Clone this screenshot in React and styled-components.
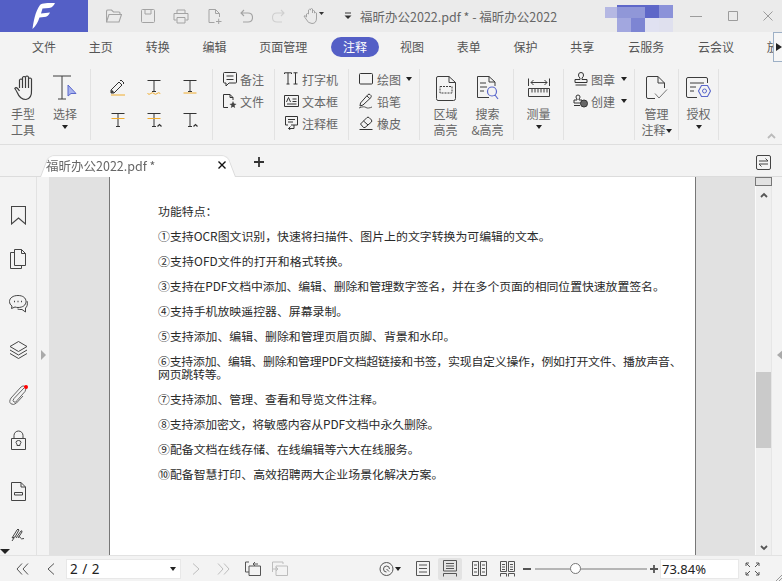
import styled, { createGlobalStyle } from "styled-components";

const Global = createGlobalStyle`
  html, body { margin: 0; padding: 0; background: #f3f3f3; }
  * { box-sizing: border-box; }
  body { font-family: "Noto Sans CJK SC", "Noto Sans", sans-serif; overflow: hidden; }
`;

const Window = styled.div`
  width: 782px;
  height: 581px;
  display: flex;
  flex-direction: column;
  overflow: hidden;
  position: relative;
`;

/* title bar */
const TitleBar = styled.div`
  height: 32px;
  display: flex;
  align-items: center;
  background: #ebebeb;
`;
const Logo = styled.div`
  width: 88px;
  height: 32px;
  background: #545fc6;
  display: flex;
  align-items: center;
  justify-content: center;
`;
const QuickTools = styled.div`
  width: 272px;
  flex: none;
  display: flex;
  align-items: center;
  color: #a3a3a3;
  padding-left: 18px;
  gap: 18.5px;
`;
const TitleText = styled.div`
  font-size: 12.5px;
  color: #666;
  white-space: nowrap;
  width: 245px;
  flex: none;
  font-family: "Noto Sans CJK SC", sans-serif;
`;
const Mosaic = styled.div`
  width: 68px;
  height: 27px;
  margin-top: 5px;
  display: grid;
  grid-template-columns: 12px repeat(4, 14px);
  grid-template-rows: 2px 11px 14px;
`;
const Tile = styled.div`
  background: ${(p) => p.$c};
`;
const WinButtons = styled.div`
  display: flex;
  align-items: center;
  margin-left: 17px;
  gap: 25.5px;
  color: #9c9c9c;
`;

/* menu tabs */
const MenuBar = styled.div`
  height: 30px;
  background: #f3f3f3;
  display: flex;
  align-items: center;
  padding-left: 20px;
  gap: 8.8px;
  position: relative;
  overflow: hidden;
`;
const MenuTab = styled.div`
  flex: none;
  height: 20px;
  line-height: 20px;
  padding: 0 12px;
  margin-left: ${(p) => p.$ml || 0}px;
  border-radius: 10px;
  font-size: 12px;
  color: ${(p) => (p.$active ? "#fff" : "#555")};
  background: ${(p) => (p.$active ? "#545fc6" : "transparent")};
`;
const MenuMore = styled.div`
  position: absolute;
  right: 0;
  top: 0;
  width: 9px;
  height: 30px;
  background: #f6f6f6;
  border: 1px solid #9db0c6;
  border-right: 0;
  display: flex;
  align-items: center;
  padding-left: 2px;
`;

/* ribbon */
const Ribbon = styled.div`
  height: 83px;
  background: #f3f3f3;
  border-bottom: 1px solid #dedede;
  display: flex;
  padding-top: 7px;
  position: relative;
`;
const Group = styled.div`
  flex: none;
  width: ${(p) => p.$w}px;
  height: 71px;
  border-right: 1px solid #e2e2e2;
  display: flex;
  justify-content: ${(p) => p.$justify || "flex-start"};
`;
const BigButton = styled.div`
  width: ${(p) => p.$w}px;
  display: flex;
  flex-direction: column;
  align-items: center;
  color: #3c3c3c;
`;
const BigIcon = styled.div`
  height: 37px;
  padding-top: 1px;
  display: flex;
  align-items: center;
  justify-content: center;
`;
const BigLabel = styled.div`
  font-size: 12px;
  line-height: 15.5px;
  color: #666;
  text-align: center;
  white-space: nowrap;
`;
const Caret = styled.span`
  display: inline-block;
  width: 0;
  height: 0;
  border-left: 3.5px solid transparent;
  border-right: 3.5px solid transparent;
  border-top: 4px solid #222;
  vertical-align: middle;
  flex: none;
`;
const LabelCaret = styled(Caret)`
  margin-top: 3px;
`;
const TextGrid = styled.div`
  display: grid;
  grid-template-columns: repeat(3, 36px);
  grid-template-rows: 34px 32px;
  padding: 1px 0 0 9px;
  justify-items: center;
  align-items: center;
  color: #333;
`;
const SmallStack = styled.div`
  display: flex;
  flex-direction: column;
  margin-top: -1px;
  padding-left: 9px;
`;
const SmallRow = styled.div`
  height: 22px;
  display: flex;
  align-items: center;
  color: #333;
  gap: ${(p) => p.$gap || 3}px;
`;
const SmallLabel = styled.span`
  font-size: 12px;
  color: #666;
  white-space: nowrap;
`;
const RowIcon = styled.span`
  width: 15px;
  display: flex;
  justify-content: center;
  flex: none;
`;
const RowCaret = styled(Caret)`
  margin-left: ${(p) => p.$gap}px;
`;
const Collapse = styled.div`
  position: absolute;
  right: 6px;
  bottom: 5px;
  color: #bbb;
`;

/* document tabs */
const TabStrip = styled.div`
  height: 32px;
  background: #f3f3f3;
  border-bottom: 1px solid #dcdcdc;
  display: flex;
  align-items: flex-end;
  padding-left: 40px;
  position: relative;
`;
const DocTab = styled.div`
  width: 196px;
  height: 24px;
  position: relative;
  display: flex;
  align-items: center;
  justify-content: space-between;
  padding: 0 10px 0 6px;
  font-size: 12.5px;
  color: #666;
  z-index: 0;
  margin-bottom: -1px;
  &::before {
    content: "";
    position: absolute;
    inset: 0;
    background: #fff;
    border: 1px solid #dcdcdc;
    border-bottom: 0;
    border-radius: 6px 6px 0 0;
    transform: perspective(40px) rotateX(9deg);
    transform-origin: bottom;
    z-index: -1;
  }
`;
const NewTab = styled.div`
  margin: 0 0 4px 18px;
  color: #333;
  display: flex;
  height: 20px;
  align-items: center;
`;
const SwapButton = styled.div`
  margin: 0 10px 5px auto;
  width: 16px;
  height: 16px;
  display: flex;
`;

/* main area */
const Main = styled.div`
  flex: 1;
  display: flex;
  min-height: 0;
`;
const SideBar = styled.div`
  width: 37px;
  background: #f3f3f3;
  border-right: 1px solid #e2e2e2;
  display: flex;
  flex-direction: column;
  align-items: center;
  padding-top: 29px;
  color: #444;
  position: relative;
  overflow: hidden;
`;
const SideItem = styled.div`
  height: ${(p) => p.$h}px;
  flex: none;
  display: flex;
  justify-content: center;
  position: relative;
`;
const Dot = styled.span`
  position: absolute;
  top: 0;
  right: -1px;
  width: 4px;
  height: 4px;
  border-radius: 50%;
  background: #f00;
`;
const SideMore = styled.div`
  position: absolute;
  left: 0;
  bottom: 1px;
  width: 0;
  height: 0;
  border-left: 5px solid transparent;
  border-right: 5px solid transparent;
  border-top: 5px solid #222;
`;
const Strip = styled.div`
  width: ${(p) => p.$w}px;
  flex: none;
  background: #f3f3f3;
  display: flex;
  align-items: center;
  justify-content: center;
  padding-bottom: 22px;
`;
const Arrow = styled.div`
  width: 0;
  height: 0;
  border-top: 5px solid transparent;
  border-bottom: 5px solid transparent;
  ${(p) => (p.$left ? "border-right: 6px solid #aaa; margin-left: 5px;" : "border-left: 5px solid #aaa;")}
`;
const Canvas = styled.div`
  flex: 1;
  background: #e1e1e1;
  display: flex;
  padding-left: 60px;
  min-width: 0;
`;
const Page = styled.div`
  width: 587px;
  flex: none;
  background: #fff;
  border-left: 1px solid #777;
  border-right: 1px solid #777;
  padding: 26.5px 2px 0 48px;
  font-size: 11.9px;
  line-height: 13px;
  color: #2a2a2a;
`;
const Para = styled.p`
  margin: 0 0 12px;
  letter-spacing: ${(p) => p.$sp || 0}px;
`;
const ScrollTrack = styled.div`
  width: 17px;
  flex: none;
  background: #efefef;
  border-left: 1px solid #fafafa;
  border-right: 1px solid #e6e6e6;
  display: flex;
  flex-direction: column;
  align-items: center;
  color: #555;
`;
const ScrollSplit = styled.div`
  width: 17px;
  height: 9px;
  flex: none;
  background: #e2e2e2;
  border: 1px solid #777;
`;
const ScrollChevron = styled.div`
  margin-top: ${(p) => p.$top}px;
  display: flex;
`;
const ScrollThumb = styled.div`
  width: 15px;
  height: 76px;
  flex: none;
  margin-top: 174px;
  background: #cacaca;
`;

/* status bar */
const StatusBar = styled.div`
  height: 26px;
  background: #f3f3f3;
  border-top: 1px solid #e2e2e2;
  display: flex;
  align-items: center;
  color: #555;
  position: relative;
`;
const Nav = styled.div`
  flex: none;
  width: ${(p) => p.$w}px;
  margin-left: ${(p) => p.$ml || 0}px;
  display: flex;
  justify-content: center;
  color: ${(p) => (p.$off ? "#bdbdbd" : "#555")};
`;
const PageBox = styled.div`
  flex: none;
  width: 115px;
  height: 20px;
  background: #fff;
  border: 1px solid #e8e8e8;
  margin-left: 8px;
  display: flex;
  align-items: center;
  justify-content: space-between;
  padding: 0 4px 0 3px;
  font-size: 13.5px;
  word-spacing: 1px;
  color: #222;
  font-family: "Noto Sans", sans-serif;
`;
const ModeCaret = styled(Caret)`
  margin-left: 1px;
`;
const ViewButton = styled.div`
  flex: none;
  width: 24px;
  height: 22px;
  margin-left: ${(p) => p.$ml || 4}px;
  display: flex;
  align-items: center;
  justify-content: center;
  background: ${(p) => (p.$active ? "#e3e3e3" : "transparent")};
  border-radius: 2px;
`;
const Slider = styled.div`
  flex: none;
  width: 112px;
  height: 2px;
  margin-left: 3px;
  background: #b5b5b5;
  position: relative;
`;
const Knob = styled.div`
  position: absolute;
  left: 35px;
  top: -5px;
  width: 11px;
  height: 11px;
  border-radius: 50%;
  background: #fff;
  border: 1px solid #777;
`;
const ZoomBox = styled.div`
  flex: none;
  width: 79px;
  height: 20px;
  margin-left: 1px;
  background: #fff;
  border: 1px solid #e8e8e8;
  padding-left: 1px;
  font-size: 13px;
  line-height: 18px;
  color: #222;
  font-family: "Noto Sans", sans-serif;
`;
const Grip = styled.div`
  position: absolute;
  right: 0;
  bottom: 0;
  display: flex;
  color: #999;
`;
const Svg = styled.svg`
  display: block;
  flex: none;
  fill: none;
  stroke: ${(p) => p.$color || "currentColor"};
  stroke-width: ${(p) => p.$sw || 1};
`;

const Ic = ({ w, h, sw, color, children }) => (
  <Svg width={w} height={h} viewBox={`0 0 ${w} ${h}`} $sw={sw} $color={color}>
    {children}
  </Svg>
);

const Orange = "#f0ac2e";

/* text-markup glyph shared by the 2x3 grid */
const TBar = ({ w = 13, top = 1.5, stem = 11, line, wavy, strike, hat }) => (
  <Ic w={16} h={16}>
    <path d={`M${8 - w / 2} ${top}H${8 + w / 2}M8 ${top}V${top + stem}M6 ${top + stem}H10`} />
    {line && <path d={`M1.5 ${top + stem + 1.5}H14.5`} stroke={Orange} />}
    {wavy && <path d="M1.5 14.5q1.6 1.6 3.2 0t3.2 0t3.2 0t3.2 0" stroke={Orange} />}
    {strike && <path d={`M1.5 ${top + 5}H14.5`} stroke={Orange} />}
    {hat && <path d="M11.5 14.5l2-2l2 2" strokeWidth="1.2" />}
  </Ic>
);

const Blocks = [
  "transparent", "#5f68c9", "#5f68c9", "#5f68c9", "#8b92d9",
  "#b5b8e3", "#9097d8", "#9097d8", "#5e67c8", "#8b92d9",
  "transparent", "#a2a7df", "#7d85d3", "#e0e1f1", "#dfe0ee",
];

const Tabs = [
  ["文件"], ["主页"], ["转换"], ["编辑"], ["页面管理"], ["注释", 3], ["视图"], ["表单"],
  ["保护"], ["共享"], ["云服务", 1], ["云会议", 1], ["放映"],
];

const Lines = [
  ["功能特点："],
  ["①支持OCR图文识别，快速将扫描件、图片上的文字转换为可编辑的文本。"],
  ["②支持OFD文件的打开和格式转换。", 0.1],
  ["③支持在PDF文档中添加、编辑、删除和管理数字签名，并在多个页面的相同位置快速放置签名。", -0.07],
  ["④支持手机放映遥控器、屏幕录制。"],
  ["⑤支持添加、编辑、删除和管理页眉页脚、背景和水印。"],
  ["⑥支持添加、编辑、删除和管理PDF文档超链接和书签，实现自定义操作，例如打开文件、播放声音、网页跳转等。", -0.22],
  ["⑦支持添加、管理、查看和导览文件注释。"],
  ["⑧支持添加密文，将敏感内容从PDF文档中永久删除。", -0.1],
  ["⑨配备文档在线存储、在线编辑等六大在线服务。"],
  ["⑩配备智慧打印、高效招聘两大企业场景化解决方案。"],
];

export default function App() {
  return (
    <Window>
      <Global />
      <TitleBar>
        <Logo>
          <svg width="24" height="28" viewBox="0 0 24 28">
            <path d="M8 3C10 1 16 1 23 1C22 3 20 6 17 6L10.5 6.5L9 11.5L18 10.5C17 13 15 15 12 15L7.5 15.5C6 20 4 24 0.5 27C1.5 20 3 10 8 3Z" fill="#fff" />
          </svg>
        </Logo>
        <QuickTools>
          <Ic w={16} h={14}>
            <path d="M.5 13V2.5q0-1.5 1.5-1.5H5.500l2 2H13q1 0 1 1V5M.5 13L3 5.500H15.500L13 13Z" strokeWidth="1.100" />
          </Ic>
          <Ic w={14} h={14}>
            <path d="M1.500.5H12.500q1 0 1 1V12.500q0 1-1 1H1.500q-1 0-1-1V1.500q0-1 1-1ZM4 .5V5H10V.5" />
          </Ic>
          <Ic w={16} h={15}>
            <path d="M4 4V1H12V4M3.500 11H1V4.500H15V11H12.500M4 8.500H12V14H4Z" />
          </Ic>
          <Ic w={14} h={15}>
            <path d="M6.500 13.500H1V.5H7.500L11.500 4.500V8M7.500 .5V4.500H11.500M8 12.500H13.500M10.700 9.700V15" />
          </Ic>
          <Ic w={13} h={14}>
            <path d="M4 1L1 4L4 7M1 4H8Q12.500 4 12.500 8.500T8 13H3" strokeWidth="1.100" />
          </Ic>
          <Ic w={13} h={14} color="#cfcfcf">
            <path d="M9 1L12 4L9 7M12 4H5Q.5 4 .5 8.500T5 13H10" strokeWidth="1.100" />
          </Ic>
          <Ic w={22} h={16}>
            <path d="M3.500 9V6q1-1 2 0V2q1-1.500 2 0V1q1-1 2 0V5V3q1-1 2 0V5q1-1 2 0V10Q13.500 15.500 9 15.500Q5 15.500 3 11Q1.500 9 1 8q1-1 2.500 1" />
            <path d="M16 4h5l-2.500 3Z" fill="#333" stroke="none" />
          </Ic>
          <Ic w={8} h={8}>
            <path d="M1 1H7" stroke="#333" />
            <path d="M.5 3.500h7l-3.500 3.500Z" fill="#333" stroke="none" />
          </Ic>
        </QuickTools>
        <TitleText>福昕办公2022.pdf * - 福昕办公2022</TitleText>
        <Mosaic>
          {Blocks.map((c, i) => (
            <Tile key={i} $c={c} />
          ))}
        </Mosaic>
        <WinButtons>
          <Ic w={12} h={12}><path d="M0 6.500H12" /></Ic>
          <Ic w={10} h={10}><path d="M.5 .5H9.500V9.500H.5Z" /></Ic>
          <Ic w={10} h={10}><path d="M.5 .5L9.500 9.500M9.500 .5L.5 9.500" /></Ic>
        </WinButtons>
      </TitleBar>

      <MenuBar>
        {Tabs.map(([t, ml]) => (
          <MenuTab key={t} $ml={ml} $active={t === "注释"}>{t}</MenuTab>
        ))}
        <MenuMore>
          <Svg width={6} height={8} viewBox="0 0 6 8"><path d="M0 0L6 4L0 8Z" fill="#222" stroke="none" /></Svg>
        </MenuMore>
      </MenuBar>

      <Ribbon>
        <Group $w={91}>
          <BigButton $w={46}>
            <BigIcon>
              <Ic w={24} h={26} sw={1.200}>
                <path d="M5.500 13V5q1.500-2 3 0V2.500q1.500-2 3 0V2q1.500-2 3 0V4q1.500-2 3 0V15Q18 23.500 12 24.500Q6 24.500 3.500 18Q2 15 .8 13.500Q2.500 11 5.500 16M8.500 5V13M11.500 3V13M14.500 3V13" transform="translate(3 0)" />
              </Ic>
            </BigIcon>
            <BigLabel>手型<br />工具</BigLabel>
          </BigButton>
          <BigButton $w={38}>
            <BigIcon>
              <Ic w={24} h={26}>
                <path d="M0 1H18M9 1V24M5 24H13" />
                <path d="M15 10V21L18 18.500H23Z" fill="#a9b4ee" stroke="#5b68cc" />
              </Ic>
            </BigIcon>
            <BigLabel>选择</BigLabel>
            <LabelCaret />
          </BigButton>
        </Group>

        <Group $w={122}>
          <TextGrid>
            <Ic w={16} h={17}>
              <path d="M1 11L9 3L12 6L4 14H1ZM10 2L11 1L14 4L13 5" />
              <path d="M1.500 10.500L4.500 13.500L1 14Z" fill="#333" stroke="none" />
              <path d="M1 16H15" stroke={Orange} />
            </Ic>
            <TBar wavy />
            <TBar line />
            <TBar strike top={1.5} stem={13} />
            <TBar strike hat top={1.5} stem={13} />
            <TBar hat top={1.5} stem={13} />
          </TextGrid>
        </Group>

        <Group $w={62}>
          <SmallStack>
            <SmallRow>
              <RowIcon>
                <Ic w={14} h={15}>
                  <path d="M1.500 .5H12.500q1 0 1 1V10q0 1-1 1H6L3 14V11H1.500q-1 0-1-1V1.500q0-1 1-1ZM3.500 4H10.500M3.500 7.500H10.500" />
                </Ic>
              </RowIcon>
              <SmallLabel>备注</SmallLabel>
            </SmallRow>
            <SmallRow>
              <RowIcon>
                <Ic w={14} h={15}>
                  <path d="M5 13.500H.5V.5H7L10 3.500V6M7 .5V3.500H10" />
                  <path d="M10 7L11 9.500L13.500 10L11.500 11.500L12.200 14L10 12.700L7.800 14L8.500 11.500L6.500 10L9 9.500Z" fill="#444" stroke="none" />
                </Ic>
              </RowIcon>
              <SmallLabel>文件</SmallLabel>
            </SmallRow>
          </SmallStack>
        </Group>

        <Group $w={74}>
          <SmallStack>
            <SmallRow>
              <RowIcon>
                <Ic w={15} h={14}>
                  <path d="M.5 2V.8H7.500V2M4 .8V12M2.500 12H5.500M9.500 .8H13.500M11.500 .8V12M9.500 12H13.500" />
                </Ic>
              </RowIcon>
              <SmallLabel>打字机</SmallLabel>
            </SmallRow>
            <SmallRow>
              <RowIcon>
                <Ic w={15} h={12}>
                  <path d="M.5 .5H14.500V11.500H.5ZM8.500 4H12.500M8.500 6.500H12.500M3 9H12.500" />
                  <path d="M2.500 7L4.500 2.500L6.500 7" strokeWidth="1" />
                </Ic>
              </RowIcon>
              <SmallLabel>文本框</SmallLabel>
            </SmallRow>
            <SmallRow>
              <RowIcon>
                <Ic w={14} h={14}>
                  <path d="M.5 .5H12.500V9H6M.5 .5V9H3M3 3.500H10M3 6H8M9 9V12.500H3.500M5.500 10.500L3.500 12.500L5.500 14" />
                </Ic>
              </RowIcon>
              <SmallLabel>注释框</SmallLabel>
            </SmallRow>
          </SmallStack>
        </Group>

        <Group $w={71}>
          <SmallStack>
            <SmallRow $gap={4}>
              <RowIcon>
                <Ic w={14} h={12}><path d="M1.500 .5H12.500q1 0 1 1V10q0 1-1 1H1.500q-1 0-1-1V1.500q0-1 1-1Z" /></Ic>
              </RowIcon>
              <SmallLabel>绘图</SmallLabel>
              <RowCaret $gap={1} />
            </SmallRow>
            <SmallRow $gap={4}>
              <RowIcon>
                <Ic w={15} h={16}>
                  <path d="M2.500 10L10 1.500Q11 .8 12 1.500L13 2.500Q13.500 3.500 13 4.500L5 12L2 13ZM9 3L11.700 5.500" />
                  <path d="M1 15C4 13.500 7 13.500 8 14.500C9 15.500 12 15 14 14" strokeWidth=".8" />
                </Ic>
              </RowIcon>
              <SmallLabel>铅笔</SmallLabel>
            </SmallRow>
            <SmallRow $gap={4}>
              <RowIcon>
                <Ic w={14} h={14}>
                  <path d="M1.500 8L8 1.500Q9 .8 10 1.500L12.500 4Q13 5 12.500 6L6 11.500H4.500ZM4.500 5L9 9M.5 13.500H13.500" />
                </Ic>
              </RowIcon>
              <SmallLabel>橡皮</SmallLabel>
            </SmallRow>
          </SmallStack>
        </Group>

        <Group $w={94} $justify="center">
          <BigButton $w={42}>
            <BigIcon>
              <Ic w={20} h={25}>
                <path d="M2 .5H13L19.500 6.500V22.500q0 2-2 2H2q-1.500 0-1.500-2V2q0-1.500 1.500-1.500ZM13 .5V6.500H19.500" />
                <path d="M4 10.500H16V17H4Z" strokeDasharray="2 1" />
              </Ic>
            </BigIcon>
            <BigLabel>区域<br />高亮</BigLabel>
          </BigButton>
          <BigButton $w={42}>
            <BigIcon>
              <Ic w={22} h={25}>
                <path d="M12 21.500H.5V.5H12L18 6V10M12 .5V6H18M3 7H9M3 11H10M3 15H7" />
                <path d="M19.500 15.500a4.500 4.500 0 1 1-9 0a4.500 4.500 0 1 1 9 0ZM18 19L21 23" stroke="#5b68cc" strokeWidth="1.200" />
              </Ic>
            </BigIcon>
            <BigLabel>搜索<br />&amp;高亮</BigLabel>
          </BigButton>
        </Group>

        <Group $w={50} $justify="center">
          <BigButton $w={48}>
            <BigIcon>
              <Ic w={22} h={20}>
                <path d="M.5 .5V8M21.500 .5V8M3 4.500H19M5.500 2L3 4.500L5.500 7M16.500 2L19 4.500L16.500 7" />
                <path d="M.5 10.500H21.500V18.500H.5ZM4 10.500V14.500M7 10.500V14.500M10 10.500V14.500M13 10.500V14.500M16 10.500V14.500M19 10.500V14.500" />
              </Ic>
            </BigIcon>
            <BigLabel>测量</BigLabel>
            <LabelCaret />
          </BigButton>
        </Group>

        <Group $w={71}>
          <SmallStack>
            <SmallRow>
              <RowIcon>
                <Ic w={14} h={14}>
                  <path d="M4.500 3a2.500 2.500 0 1 1 5 0q0 2-1.500 3V7.500H13V10.500H1V7.500H6V6Q4.500 5 4.500 3ZM1.500 13H12.500" />
                </Ic>
              </RowIcon>
              <SmallLabel>图章</SmallLabel>
              <RowCaret $gap={3} />
            </SmallRow>
            <SmallRow>
              <RowIcon>
                <Ic w={15} h={14}>
                  <path d="M3 3a2 2 0 1 1 4 0q0 1-1 2V6H9V9H1V6H4V5Q3 4 3 3ZM1 11.500H7" />
                  <circle cx="11" cy="9.500" r="3.500" fill="#666" />
                </Ic>
              </RowIcon>
              <SmallLabel>创建</SmallLabel>
              <RowCaret $gap={3} />
            </SmallRow>
          </SmallStack>
        </Group>

        <Group $w={44} $justify="center">
          <BigButton $w={43}>
            <BigIcon>
              <Ic w={22} h={24}>
                <path d="M9 22.500H2q-1.500 0-1.500-1.500V2q0-1.500 1.500-1.500H12L18.500 7V12M12 .5V7H18.500" />
                <path d="M9 17.500L13 22L21 13.500" stroke="#777" />
              </Ic>
            </BigIcon>
            <BigLabel>管理<br />注释<Caret /></BigLabel>
          </BigButton>
        </Group>

        <Group $w={40} $justify="center">
          <BigButton $w={39}>
            <BigIcon>
              <Ic w={25} h={23}>
                <path d="M11 20.500H2q-1.500 0-1.500-1.500V2q0-1.500 1.500-1.500H20q1.500 0 1.500 1.500V6M4 6H18M4 10H10M4 14H8" />
                <path d="M15.500 8.500H21.500L24.500 14L21.500 19.500H15.500L12.500 14Z" stroke="#5b68cc" strokeWidth="1.100" />
                <circle cx="18.500" cy="14" r="2" stroke="#5b68cc" />
              </Ic>
            </BigIcon>
            <BigLabel>授权</BigLabel>
            <LabelCaret />
          </BigButton>
        </Group>
        <Collapse>
          <Ic w={9} h={6} sw={1.800}><path d="M1 5L4.500 1.500L8 5" /></Ic>
        </Collapse>
      </Ribbon>

      <TabStrip>
        <DocTab>
          <span>福昕办公2022.pdf *</span>
          <Ic w={8} h={8} sw={1.400}><path d="M.5 .5L7.500 7.500M7.500 .5L.5 7.500" stroke="#111" /></Ic>
        </DocTab>
        <NewTab>
          <Ic w={10} h={10} sw={1.800}><path d="M5 0V10M0 5H10" /></Ic>
        </NewTab>
        <SwapButton>
          <Ic w={15} h={15}>
            <path d="M2 .5H13q1.500 0 1.500 1.500V13q0 1.500-1.500 1.500H2Q.5 14.500 .5 13V2Q.5 .5 2 .5ZM3 6H12L9.500 3.500M12 9H3L5.500 11.500" stroke="#444" />
          </Ic>
        </SwapButton>
      </TabStrip>

      <Main>
        <SideBar>
          <SideItem $h={43}>
            <Ic w={15} h={19} sw={1.100}><path d="M.5 .5H14.500V18L7.500 12L.5 18Z" /></Ic>
          </SideItem>
          <SideItem $h={46}>
            <Ic w={16} h={20}>
              <path d="M4.500 16.500V.5H11.500L15.500 4.500V16.500ZM11.500 .5V4.500H15.500M4.500 3.500H.5V19.500H11.500V16.500" />
            </Ic>
          </SideItem>
          <SideItem $h={46}>
            <Ic w={19} h={18}>
              <path d="M9 .5C4 .5.5 3 .5 6.500C.5 8.500 1.500 10 3 11L2.500 13.500L6 12C7 12.300 8 12.500 9 12.500C14 12.500 17 10 17 6.500S14 .5 9 .5Z" />
              <path d="M5 6.500H6M8.500 6.500H9.500M12 6.500H13" strokeWidth="1.300" />
              <path d="M18 6C19 9 18 12 16.500 13L16.500 17L13 14.500C11.500 14.700 10 14.500 8.500 14" />
            </Ic>
          </SideItem>
          <SideItem $h={44}>
            <Ic w={19} h={18}>
              <path d="M9.500 .5L18 5.500L9.500 10.500L1 5.500ZM1 9L9.500 14L18 9M1 12.500L9.500 17.500L18 12.500" />
            </Ic>
          </SideItem>
          <SideItem $h={45}>
            <Ic w={18} h={20} color="#666">
              <path d="M15 3L5 13.500Q3 16 5 17T8 15.500L16 6.500Q18 3 16 1.500T12 2L2 13Q-.5 17 2 18.800T7.500 18L14 11" />
            </Ic>
            <Dot />
          </SideItem>
          <SideItem $h={52}>
            <Ic w={15} h={20}>
              <path d="M.5 8.500H14.500V19.500H.5ZM3 8.500V5.500a4.500 4.500 0 0 1 9 0V8.500M6 15.500V14q-1-1-1-1.500a2.500 2 0 0 1 5 0q0 .5-1 1.500V15.500Z" />
            </Ic>
          </SideItem>
          <SideItem $h={46}>
            <Ic w={15} h={19}>
              <path d="M.5 .5H10L14.500 5V18.500H.5ZM10 .5V5H14.500M3.500 10.500H11.500V13H3.500Z" />
            </Ic>
          </SideItem>
          <SideItem $h={30}>
            <Ic w={14} h={14}>
              <path d="M1 10L6 2Q7 0 8 2L4 9L1 10M5 10L10 3Q11 2 11 4L7 10M7.500 9Q9 8 9.500 10Q10 11.500 13 10.500M1 13L3 10" />
            </Ic>
          </SideItem>
          <SideMore />
        </SideBar>
        <Strip $w={12}><Arrow /></Strip>
        <Canvas>
          <Page>
            {Lines.map(([t, sp]) => (
              <Para key={t} $sp={sp}>{t}</Para>
            ))}
          </Page>
        </Canvas>
        <ScrollTrack>
          <ScrollSplit />
          <ScrollChevron $top={6}>
            <Ic w={8} h={6} sw={1.800}><path d="M1 5L4 2L7 5" /></Ic>
          </ScrollChevron>
          <ScrollThumb />
          <ScrollChevron $top={97}>
            <Ic w={8} h={6} sw={1.800}><path d="M1 1L4 4L7 1" /></Ic>
          </ScrollChevron>
        </ScrollTrack>
        <Strip $w={10}><Arrow $left /></Strip>
      </Main>

      <StatusBar>
        <Nav $w={14} $ml={15}>
          <Ic w={13} h={12}><path d="M6 .5L1 6L6 11.500M12 .5L7 6L12 11.500" /></Ic>
        </Nav>
        <Nav $w={14} $ml={15}>
          <Ic w={8} h={12}><path d="M7 .5L1 6L7 11.500" /></Ic>
        </Nav>
        <PageBox>
          <span>2 / 2</span>
          <Caret />
        </PageBox>
        <Nav $w={14} $ml={8} $off>
          <Ic w={8} h={12}><path d="M1 .5L7 6L1 11.500" /></Ic>
        </Nav>
        <Nav $w={14} $ml={13} $off>
          <Ic w={13} h={12}><path d="M1 .5L6 6L1 11.500M7 .5L12 6L7 11.500" /></Ic>
        </Nav>
        <Nav $w={17} $ml={14}>
          <Ic w={16} h={15}><path d="M4 11H.5V1H4M4 5H15.500V14.500H4ZM13 3H8M10 1L8 3L10 5" /></Ic>
        </Nav>
        <Nav $w={17} $ml={10} $off>
          <Ic w={16} h={15}><path d="M.5 11V1H11V3M4 5H15.500V14.500H4ZM1 8H6M4 6L6 8L4 10" /></Ic>
        </Nav>
        <Nav $w={16} $ml={90}>
          <Ic w={15} h={14}>
            <circle cx="7.500" cy="7" r="6.500" />
            <path d="M4.500 7a3 3 0 0 1 6 0M7.500 7L10 9.500M4.500 7q0 3 3 3" />
          </Ic>
        </Nav>
        <ModeCaret />
        <ViewButton $ml={10}>
          <Ic w={14} h={15}><path d="M.5 .5H13.500V14.500H.5ZM3 4H11M3 7.500H11M3 11H11" /></Ic>
        </ViewButton>
        <ViewButton $ml={3} $active>
          <Ic w={14} h={17}><path d="M.5 .5H13.500V11H.5ZM3 3.500H11M3 6H11M3 8.500H11M.5 16.500V13.500H13.500V16.500" /></Ic>
        </ViewButton>
        <ViewButton $ml={5}>
          <Ic w={15} h={15}><path d="M.5 .5H6.500V14.500H.5ZM8.500 .5H14.500V14.500H8.500ZM2 4H5M2 7.500H5M2 11H5M10 4H13M10 7.500H13M10 11H13" /></Ic>
        </ViewButton>
        <ViewButton $ml={4}>
          <Ic w={15} h={16}><path d="M.5 .5H6.500V10.500H.5ZM8.500 .5H14.500V10.500H8.500ZM2 3.500H5M2 6H5M2 8.500H5M10 3.500H13M10 6H13M10 8.500H13M.5 15.500V12.500H6.500V15.500M8.500 15.500V12.500H14.500V15.500" /></Ic>
        </ViewButton>
        <Nav $w={10} $ml={3}>
          <Ic w={8} h={2} sw={2}><path d="M0 1H8" /></Ic>
        </Nav>
        <Slider><Knob /></Slider>
        <Nav $w={10} $ml={2}>
          <Ic w={8} h={8} sw={1.800}><path d="M4 0V8M0 4H8" /></Ic>
        </Nav>
        <ZoomBox>73.84%</ZoomBox>
        <Nav $w={16} $ml={5}>
          <Ic w={15} h={14}>
            <path d="M1 1L5 5M1 1H4M1 1V4M14 1L10 5M14 1H11M14 1V4M1 13L5 9M1 13H4M1 13V10M14 13L10 9M14 13H11M14 13V10" />
          </Ic>
        </Nav>
        <Grip>
          <Ic w={6} h={6}><path d="M0 6L6 0M3 6L6 3" /></Ic>
        </Grip>
      </StatusBar>
    </Window>
  );
}
